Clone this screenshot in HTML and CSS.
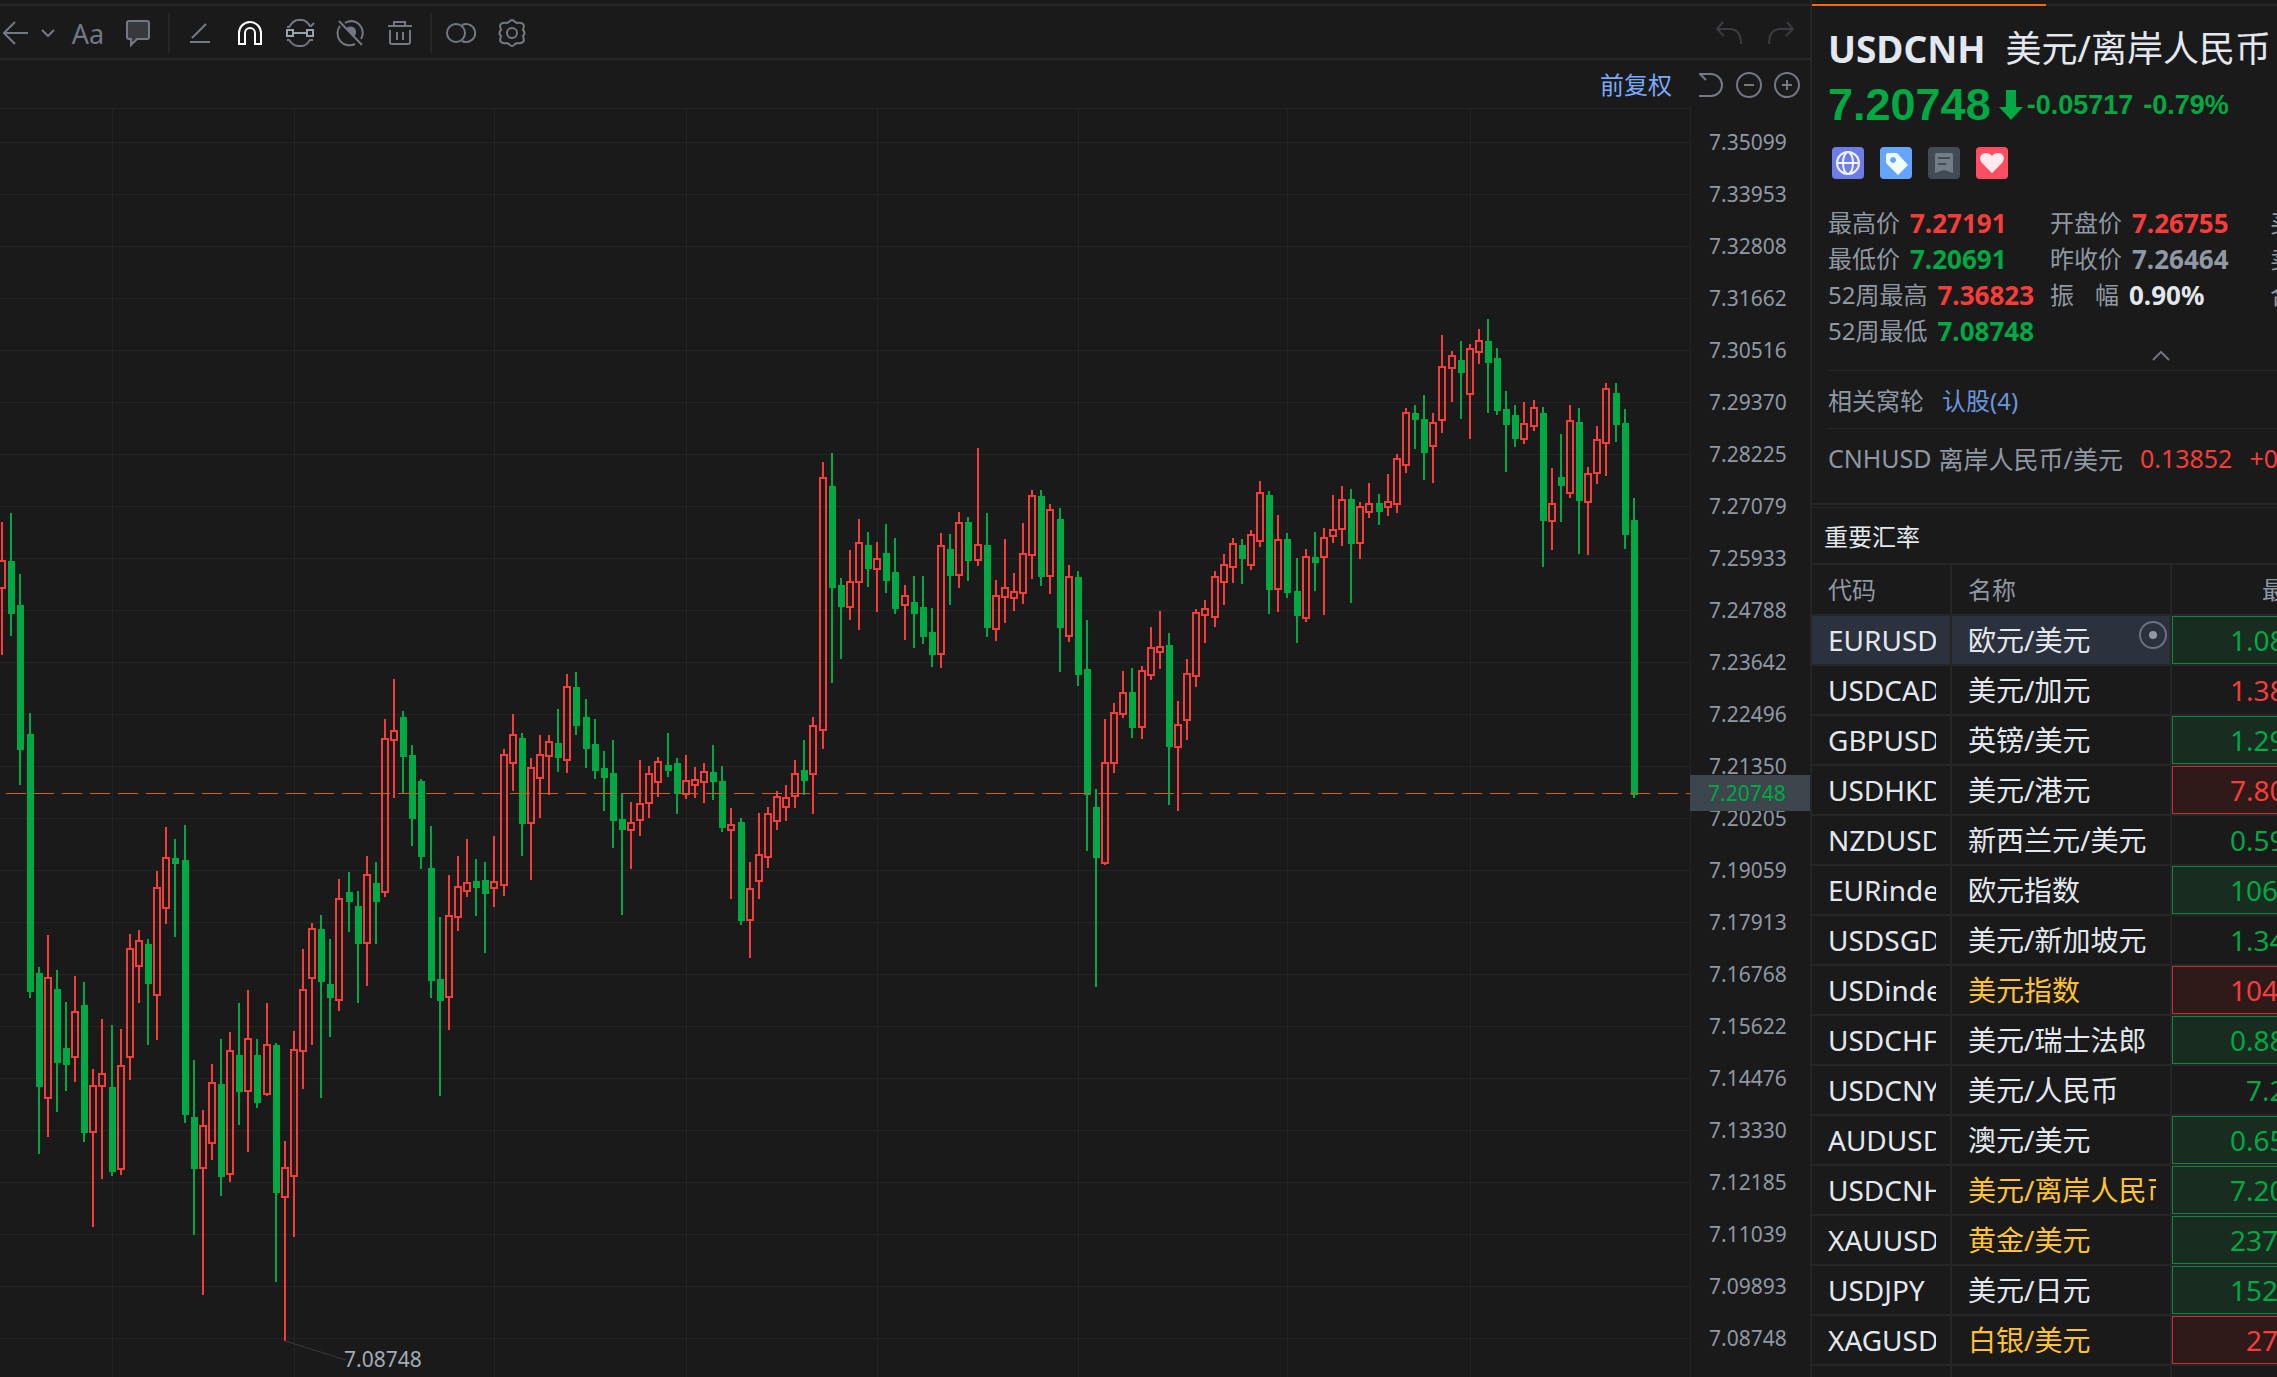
FILE: index.html
```html
<!DOCTYPE html>
<html lang="zh-CN">
<head>
<meta charset="utf-8">
<title>USDCNH 美元/离岸人民币</title>
<link rel="stylesheet" href="styles.css">
</head>
<body>
<main class="chart">
  <header class="toolbar">
    <button class="tool tool-back" aria-label="返回"><svg width="26" height="26" viewBox="0 0 26 26"><path d="M25 13H2M12 2L1 13l11 11"/></svg></button>
    <button class="tool tool-more" aria-label="更多"><svg width="16" height="16" viewBox="0 0 16 16"><path d="M2 5l6 6 6-6"/></svg></button>
    <button class="tool tool-text" aria-label="文字">Aa</button>
    <button class="tool" aria-label="批注"><svg width="28" height="30" viewBox="0 0 28 30"><path class="soft" d="M5 3h18q2 0 2 2v14q0 2-2 2H13l-6 6v-6H5q-2 0-2-2V5q0-2 2-2z"/></svg></button>
    <span class="split"></span>
    <button class="tool" aria-label="画线"><svg width="28" height="28" viewBox="0 0 28 28"><path d="M4 23h20M6 19L20 5"/></svg></button>
    <button class="tool tool-on" aria-label="磁吸"><svg width="28" height="28" viewBox="0 0 28 28"><path d="M3 25V14a11 11 0 0 1 22 0v11h-6V14a5 5 0 0 0-10 0v11z"/></svg></button>
    <button class="tool" aria-label="连续画线"><svg width="30" height="30" viewBox="0 0 30 30"><path d="M2 9h2c3-4 5-7 9-7h4c4 0 6 3 8 6h1l3-3M2 22h2c3 4 5 6 9 6h4c4 0 6-3 8-6h3"/><path class="light" d="M2 12h6v6H2zM22 12h6v6h-6zM8 15h14"/></svg></button>
    <button class="tool" aria-label="隐藏"><svg width="30" height="30" viewBox="0 0 30 30"><path d="M10 5q3-2 7-2a12 12 0 0 1 9 18M20 26A12 12 0 0 1 5 8M4 3l23 24"/><path class="fill" d="M12 11a4 4 0 0 1 7 6z"/></svg></button>
    <button class="tool" aria-label="删除"><svg width="28" height="28" viewBox="0 0 28 28"><path d="M2 7h24M8 7V3h11v4M4 11v12q0 2 2 2h16q2 0 2-2V11M11 13v8M17 13v8"/></svg></button>
    <span class="split"></span>
    <button class="tool" aria-label="叠加"><svg width="34" height="26" viewBox="0 0 34 26"><circle cx="11" cy="13" r="9"/><path d="M17 5a9 9 0 1 1 0 16"/></svg></button>
    <button class="tool" aria-label="设置"><svg width="30" height="30" viewBox="0 0 30 30"><path d="M12 4q3-4 6 0l2 1q6-1 7 3l-1 4q3 3 0 6l1 4q-1 4-7 3l-2 1q-3 4-6 0l-2-1q-6 1-7-3l1-4q-3-3 0-6L3 8q1-4 7-3z"/><circle cx="15" cy="15" r="5"/></svg></button>
    <span class="grow"></span>
    <button class="tool tool-off" aria-label="撤销"><svg width="28" height="28" viewBox="0 0 28 28"><path d="M8 3L2 10l7 7M2 10h14q10 1 10 15"/></svg></button>
    <button class="tool tool-off" aria-label="重做"><svg width="28" height="28" viewBox="0 0 28 28"><path d="M20 3l6 7-7 7M26 10H12Q2 11 2 25"/></svg></button>
  </header>
  <div class="subbar">
    <button class="adjust">前复权</button>
    <button class="zoom" aria-label="重置"><svg width="28" height="28" viewBox="0 0 28 28"><path d="M2 3h12a11 11 0 0 1 0 22H2M3 3l6 6"/></svg></button>
    <button class="zoom" aria-label="缩小"><svg width="28" height="28" viewBox="0 0 28 28"><circle cx="14" cy="14" r="12"/><path d="M9 14h10"/></svg></button>
    <button class="zoom" aria-label="放大"><svg width="28" height="28" viewBox="0 0 28 28"><circle cx="14" cy="14" r="12"/><path d="M9 14h10M14 9v10"/></svg></button>
  </div>
  <div class="board">
    <svg class="plot" id="plot" role="img" aria-label="USDCNH 日K线"></svg>
    <ol class="axis">
      <li>7.35099</li><li>7.33953</li><li>7.32808</li><li>7.31662</li><li>7.30516</li><li>7.29370</li>
      <li>7.28225</li><li>7.27079</li><li>7.25933</li><li>7.24788</li><li>7.23642</li><li>7.22496</li>
      <li>7.21350</li><li>7.20205</li><li>7.19059</li><li>7.17913</li><li>7.16768</li><li>7.15622</li>
      <li>7.14476</li><li>7.13330</li><li>7.12185</li><li>7.11039</li><li>7.09893</li><li>7.08748</li>
    </ol>
    <output class="last">7.20748</output>
  </div>
</main>

<aside class="side">
  <div class="tabline"></div>
  <section class="quote">
    <h1 class="title"><b>USDCNH</b><span>美元/离岸人民币</span></h1>
    <div class="price">
      <strong>7.20748</strong>
      <svg width="24" height="30" viewBox="0 0 24 30"><path d="M7 0h10v17h7L12 30 0 17h7z"/></svg>
      <span>-0.05717</span><span>-0.79%</span>
    </div>
    <div class="badges">
      <button class="badge globe" aria-label="市场"><svg width="32" height="32" viewBox="0 0 32 32"><circle cx="16" cy="16" r="11"/><ellipse cx="16" cy="16" rx="5" ry="11"/><path d="M5 16h22"/></svg></button>
      <button class="badge tag" aria-label="标签"><svg width="32" height="32" viewBox="0 0 32 32"><path fill-rule="evenodd" d="M8 6h9l11 12-10 10L6 16V8q0-2 2-2zM13 10a3 3 0 1 0 .1 0z"/></svg></button>
      <button class="badge note" aria-label="笔记"><svg width="32" height="32" viewBox="0 0 32 32"><path class="page" d="M9 6h14q2 0 2 2v18l-9-3-9 3V8q0-2 2-2z"/><path class="ink" d="M10 11h12M10 17h8"/></svg></button>
      <button class="badge heart" aria-label="自选"><svg width="32" height="32" viewBox="0 0 32 32"><path d="M16 26L6 16C2 11 5 6 10 6q4 0 6 3 2-3 6-3c5 0 8 5 4 10z"/></svg></button>
    </div>
    <dl class="stats">
      <div><dt>最高价</dt><dd class="up">7.27191</dd></div>
      <div><dt>开盘价</dt><dd class="up">7.26755</dd></div>
      <div><dt>买</dt></div>
      <div><dt>最低价</dt><dd class="down">7.20691</dd></div>
      <div><dt>昨收价</dt><dd>7.26464</dd></div>
      <div><dt>卖</dt></div>
      <div><dt>52周最高</dt><dd class="up">7.36823</dd></div>
      <div><dt class="spread"><span>振</span><span>幅</span></dt><dd class="white">0.90%</dd></div>
      <div><dt>合</dt></div>
      <div><dt>52周最低</dt><dd class="down">7.08748</dd></div>
    </dl>
    <button class="fold" aria-label="收起"><svg width="20" height="12" viewBox="0 0 20 12"><path d="M2 11l8-8 8 8"/></svg></button>
    <p class="related"><span>相关窝轮</span><a href="#warrants">认股(4)</a></p>
    <p class="inverse"><span>CNHUSD</span><span>离岸人民币/美元</span><span class="up">0.13852</span><span class="up">+0</span></p>
  </section>

  <section class="rates">
    <h2>重要汇率</h2>
    <table>
      <colgroup><col class="c-code"><col class="c-name"><col></colgroup>
      <thead><tr><th>代码</th><th>名称</th><th class="r-latest">最</th></tr></thead>
      <tbody>
        <tr class="on"><td><span>EURUSD</span></td><td><span>欧元/美元</span><svg class="eye" width="28" height="28" viewBox="0 0 28 28"><circle cx="14" cy="14" r="13"/><circle class="dot" cx="14" cy="14" r="4"/></svg></td><td class="num down box">1.08</td></tr>
        <tr><td><span>USDCAD</span></td><td><span>美元/加元</span></td><td class="num up">1.38</td></tr>
        <tr><td><span>GBPUSD</span></td><td><span>英镑/美元</span></td><td class="num down box">1.29</td></tr>
        <tr><td><span>USDHKD</span></td><td><span>美元/港元</span></td><td class="num up box">7.80</td></tr>
        <tr><td><span>NZDUSD</span></td><td><span>新西兰元/美元</span></td><td class="num down">0.59</td></tr>
        <tr><td><span>EURindex</span></td><td><span>欧元指数</span></td><td class="num down box">106</td></tr>
        <tr><td><span>USDSGD</span></td><td><span>美元/新加坡元</span></td><td class="num down">1.34</td></tr>
        <tr class="fav"><td><span>USDindex</span></td><td><span>美元指数</span></td><td class="num up box">104</td></tr>
        <tr><td><span>USDCHF</span></td><td><span>美元/瑞士法郎</span></td><td class="num down box">0.88</td></tr>
        <tr><td><span>USDCNY</span></td><td><span>美元/人民币</span></td><td class="num down short">7.2</td></tr>
        <tr><td><span>AUDUSD</span></td><td><span>澳元/美元</span></td><td class="num down box">0.65</td></tr>
        <tr class="fav"><td><span>USDCNH</span></td><td><span>美元/离岸人民币</span></td><td class="num down box">7.20</td></tr>
        <tr class="fav"><td><span>XAUUSD</span></td><td><span>黄金/美元</span></td><td class="num down box">237</td></tr>
        <tr><td><span>USDJPY</span></td><td><span>美元/日元</span></td><td class="num down box">152</td></tr>
        <tr class="fav"><td><span>XAGUSD</span></td><td><span>白银/美元</span></td><td class="num up box short">27</td></tr>
        <tr><td></td><td></td><td></td></tr>
      </tbody>
    </table>
  </section>
</aside>
<script src="chart.js"></script>
</body>
</html>
```
FILE: styles.css
```css
* { box-sizing: border-box; }

body {
  margin: 0;
  display: flex;
  height: 100vh;
  overflow: hidden;
  background: #1a1a1a;
  color: #8f98a3;
  font-family: "Noto Sans", "Noto Sans CJK SC", sans-serif;
  font-size: 24px;
}

button {
  border: 0;
  padding: 0;
  background: none;
  color: inherit;
  font: inherit;
}

svg { display: block; }

.up { color: #f63d39; }
.down { color: #00a943; }
.white { color: #e3e8ee; }

/* chart column */
.chart {
  flex: 1;
  min-width: 0;
  display: flex;
  flex-direction: column;
  padding-top: 4px;
}

.toolbar {
  display: flex;
  align-items: center;
  height: 56px;
  padding: 2px 3px 0 0;
  border-top: 2px solid #262626;
  border-bottom: 2px solid #262626;
}

.tool {
  display: flex;
  align-items: center;
  justify-content: center;
  width: 50px;
  height: 40px;
  color: #737884;
}
.tool svg, .zoom svg, .fold svg {
  fill: none;
  stroke: currentColor;
  stroke-width: 2;
}
.tool .soft { fill: #38393d; }
.tool .light { stroke: #98a2ad; }
.tool .fill { fill: currentColor; }
.tool-back { width: 32px; }
.tool-more { width: 31px; }
.tool-text { font-size: 27px; }
.tool-on { color: #fff; }
.tool-off { width: 52px; color: #3b3c3f; }
.split { width: 2px; height: 40px; margin: 0 5px; background: #262626; }
.grow { flex: 1; }

.subbar {
  display: flex;
  align-items: center;
  justify-content: flex-end;
  height: 48px;
  padding: 2px 4px 0 0;
}
.adjust { margin-right: 20px; padding-bottom: 4px; color: #7aa9fb; }
.zoom {
  display: flex;
  justify-content: center;
  width: 38px;
  color: #737884;
}

.board {
  position: relative;
  flex: 1;
  min-height: 0;
  display: flex;
}
.plot { flex: 1; min-width: 0; height: 100%; }
.grid { stroke: #242424; stroke-width: 1; fill: none; }
.grid-v { stroke: #242424; stroke-width: 1; }
.now { stroke: #d4600f; stroke-width: 1; stroke-dasharray: 20 8; }
.fall { fill: #00a943; }
.rise { fill: #f63d39; }
.rise-body { fill: none; stroke: #f63d39; stroke-width: 2; }
.lead { stroke: #3a3a3a; stroke-width: 1; }
.low { fill: #a3acb5; font-size: 21px; }

.axis {
  width: 120px;
  margin: 0;
  padding: 8px 0 0;
  list-style: none;
  border-left: 1px solid #242424;
}
.axis li {
  padding-left: 18px;
  font-size: 21px;
  line-height: 52px;
}
.last {
  position: absolute;
  right: 0;
  top: 667px;
  width: 120px;
  padding-left: 18px;
  background: #3d454d;
  color: #00a943;
  font-size: 21px;
  line-height: 36px;
}

/* quote column */
.side {
  width: 467px;
  overflow: hidden;
  border-left: 2px solid #262626;
  padding-top: 4px;
}
.tabline { height: 2px; background: linear-gradient(#ff6a00, #ff6a00) left / 234px 100% no-repeat #262626; }

.quote { padding: 14px 0 0 16px; white-space: nowrap; }
.title {
  display: flex;
  align-items: center;
  gap: 20px;
  height: 58px;
  margin: 0;
  color: #e3e8f0;
  font-size: 36px;
  font-weight: 400;
  line-height: 58px;
}
.title b { font-size: 37px; }
.price {
  display: flex;
  align-items: center;
  height: 54px;
  color: #00a943;
  fill: #00a943;
  font-family: "Liberation Sans", sans-serif;
  font-size: 27px;
  font-weight: 700;
}
.price strong { margin-right: 8px; font-size: 45px; }
.price svg { margin-right: 4px; }
.price span + span { margin-left: 10px; }

.badges { display: flex; gap: 16px; padding: 15px 0 26px 4px; }
.badge { width: 32px; height: 32px; border-radius: 4px; overflow: hidden; }
.globe { background: #6c7de8; fill: none; stroke: #f1f3ff; stroke-width: 2; }
.tag { background: #66a5ff; fill: #effffe; }
.note { background: #434b54; }
.page { fill: #737d87; }
.ink { stroke: #434b54; stroke-width: 2; }
.heart { background: #ff4d62; fill: #ffebee; }

.stats {
  display: grid;
  grid-template-columns: 222px 220px 40px;
  margin: 0;
  line-height: 36px;
}
.stats div { display: flex; gap: 10px; }
.stats dd { margin: 0; font-size: 26px; font-weight: 700; }
.spread { display: flex; gap: 21px; }

.fold {
  display: flex;
  align-items: flex-start;
  width: 100%;
  height: 22px;
  padding-left: 323px;
  border-bottom: 1px solid #262626;
  color: #6f747c;
}
.related {
  display: flex;
  align-items: center;
  gap: 18px;
  height: 58px;
  margin: 0;
  border-bottom: 1px solid #262626;
}
.related a { color: #6a96dc; text-decoration: none; }
.inverse {
  display: flex;
  align-items: center;
  gap: 7px;
  height: 58px;
  margin: 0 0 16px;
  font-size: 25px;
}
.inverse .up { margin-left: 10px; }

.rates { border-top: 2px solid #262626; }
.rates h2 {
  height: 58px;
  margin: 2px 0 0;
  padding-left: 12px;
  border-top: 1px solid #262626;
  border-bottom: 2px solid #262626;
  color: #e3e8ee;
  font-size: 24px;
  font-weight: 400;
  line-height: 58px;
}
.rates table {
  width: 100%;
  table-layout: fixed;
  border-spacing: 0;
  font-size: 28px;
  line-height: 48px;
  color: #e3e8ee;
}
.c-code { width: 140px; }
.c-name { width: 220px; }
.rates th {
  height: 51px;
  padding: 0 0 0 16px;
  color: #8f98a3;
  font-size: 24px;
  font-weight: 400;
  text-align: left;
}
.rates th, .rates td {
  border-bottom: 2px solid #262626;
  border-right: 2px solid #262626;
  white-space: nowrap;
}
.rates td { position: relative; height: 50px; padding: 0 14px 0 16px; }
.rates td span { display: block; height: 48px; overflow: hidden; }
.rates th.r-latest { padding-left: 90px; border-right: 0; overflow: hidden; }
.rates td:last-child { border-right: 0; }
.on td:not(.num) { background: #2b323d; }
.fav td:nth-child(2) { color: #ffc233; }
.rates td.num { padding: 0 0 0 58px; overflow: hidden; }
.rates td.short { padding-left: 74px; }
.rates .up { color: #f63d39; }
.rates .down { color: #00a943; }
.box.down { background: #182c20; box-shadow: inset 1px 1px #10833c, inset 0 -1px #10833c; }
.box.up { background: #2f1a19; box-shadow: inset 1px 1px #b83633, inset 0 -1px #b83633; }
.eye {
  position: absolute;
  right: 3px;
  top: 5px;
  fill: none;
  stroke: #69727f;
  stroke-width: 2;
}
.eye .dot { fill: #8f98a3; stroke: none; }
```
FILE: chart.js
```js
// Each row: direction (1 = rise, 0 = fall), high, body top, body bottom, low.
const bars = [
  [1,522,560,589,655],[0,513,561,614,636],[0,574,605,750,785],[0,713,734,992,998],[0,967,973,1087,1154],
  [1,935,977,1099,1137],[0,970,989,1063,1112],[0,1002,1048,1065,1091],[1,976,1011,1058,1082],[0,982,1005,1133,1142],
  [1,1069,1085,1133,1227],[1,1019,1073,1087,1179],[0,1025,1087,1172,1176],[1,1029,1065,1170,1175],[1,934,948,1058,1080],
  [1,930,940,967,1003],[0,939,944,984,1045],[1,871,887,996,1040],[1,827,857,909,924],[0,839,858,864,937],
  [0,825,860,1115,1123],[0,1060,1117,1169,1235],[1,1110,1125,1169,1295],[1,1064,1082,1144,1160],[0,1039,1084,1177,1196],
  [1,1032,1050,1175,1182],[0,1003,1055,1092,1125],[1,990,1038,1092,1152],[0,1039,1055,1103,1108],[1,1003,1044,1095,1096],
  [0,1043,1045,1193,1282],[1,1141,1167,1198,1341],[1,1031,1049,1177,1237],[1,949,989,1052,1089],[1,923,928,979,1045],
  [0,915,929,982,1098],[0,939,984,998,1037],[1,879,898,1001,1011],[0,872,892,902,932],[0,891,906,944,1003],
  [1,856,874,944,986],[0,862,883,902,944],[1,719,738,893,897],[1,679,730,741,798],[0,711,717,757,794],
  [0,745,755,819,846],[0,779,781,857,869],[0,826,868,981,998],[0,917,979,1001,1096],[1,875,915,998,1030],
  [1,856,886,918,931],[1,839,882,892,897],[0,859,881,888,916],[0,862,880,894,953],[1,836,881,889,907],
  [1,749,754,886,896],[1,714,734,764,791],[0,733,738,824,856],[1,758,767,824,880],[1,735,754,779,818],
  [1,735,741,757,795],[0,709,743,758,772],[1,674,686,761,773],[0,672,687,726,735],[0,699,717,749,768],
  [0,719,744,771,779],[0,751,768,778,811],[0,740,773,821,848],[0,793,819,830,915],[1,802,822,831,869],
  [1,760,803,821,836],[1,766,773,804,818],[1,757,761,783,797],[0,733,765,771,777],[0,758,763,794,814],
  [1,755,780,795,799],[1,767,779,786,798],[1,763,771,783,803],[0,745,772,782,800],[0,766,781,828,832],
  [1,808,824,831,899],[0,818,822,921,925],[1,862,888,921,958],[1,813,854,882,899],[1,807,813,858,868],
  [1,791,796,822,830],[1,785,797,808,821],[1,760,773,797,808],[0,740,770,781,795],[1,717,725,775,814],
  [1,462,477,731,749],[0,453,486,588,683],[0,578,585,607,659],[1,550,581,608,620],[1,519,542,583,630],
  [0,532,545,569,587],[1,542,558,570,612],[0,524,553,581,593],[0,538,572,609,614],[1,585,595,606,640],
  [0,576,602,614,648],[0,576,607,637,644],[0,608,632,655,667],[1,533,545,655,668],[0,534,549,576,605],
  [1,512,522,576,588],[0,517,522,561,581],[1,448,544,561,566],[0,513,545,628,637],[1,580,595,630,641],
  [1,539,587,598,623],[1,573,591,599,611],[1,523,553,594,604],[1,490,495,556,579],[0,490,496,577,586],
  [1,504,509,577,594],[0,508,519,628,672],[1,565,576,637,642],[0,571,577,675,686],[0,620,669,795,851],
  [0,789,807,858,987],[1,719,762,864,865],[1,703,712,764,773],[1,671,692,715,718],[0,668,692,728,738],
  [1,666,670,728,739],[1,627,647,676,680],[1,611,646,653,669],[0,633,645,747,805],[1,701,724,748,811],
  [1,659,673,721,740],[1,609,612,677,687],[1,600,608,616,643],[1,571,576,618,627],[1,554,564,583,605],
  [1,538,543,568,583],[0,539,545,559,584],[1,530,534,566,570],[1,481,492,542,547],[0,491,495,590,614],
  [1,515,539,590,612],[0,533,539,593,598],[0,558,591,616,643],[1,549,556,619,622],[0,532,557,563,591],
  [1,528,537,558,615],[1,495,529,537,543],[1,486,499,530,546],[0,489,499,544,603],[1,502,506,544,559],
  [1,483,503,513,518],[0,494,503,512,525],[1,474,501,508,516],[1,454,458,505,513],[1,408,412,466,473],
  [0,405,413,420,449],[0,395,419,453,480],[1,413,422,447,483],[1,335,366,421,433],[1,351,355,369,402],
  [0,341,360,373,419],[1,344,348,395,439],[1,329,340,353,364],[0,319,341,363,413],[0,348,358,411,415],
  [0,391,409,425,472],[0,405,415,439,447],[1,402,423,440,444],[1,400,407,427,431],[0,407,413,521,567],
  [1,468,503,522,550],[0,434,477,486,522],[1,405,420,494,498],[0,408,422,501,554],[1,467,473,503,555],
  [1,426,439,474,484],[1,383,388,444,476],[0,383,393,425,442],[0,409,423,535,549],[0,498,520,795,798]
];

const TOP = 108;        // chart units above the plot's upper edge
const LAST_Y = 793;     // level of the last price
const plot = document.getElementById('plot');

function add(name, attrs) {
  const el = document.createElementNS('http://www.w3.org/2000/svg', name);
  for (const key in attrs) el.setAttribute(key, attrs[key]);
  plot.appendChild(el);
  return el;
}

const line = (cls, x1, y1, x2, y2) => add('line', { class: cls, x1, y1, x2, y2 });

// Bars are spaced so that every eighth or ninth gap is one pixel wider.
const barX = i => 2 + 9 * i + Math.floor((i + 6.078) / 8.688);

line('grid', 0, 0.5, '100%', 0.5);
for (let k = 0; k < 24; k++) {
  const y = 142 - TOP + 52 * k + 0.5;
  line('grid', 0, y, '100%', y);
}
[112, 294, 494, 686, 877, 1078, 1287, 1470].forEach(x => line('grid-v', x + 0.5, 0, x + 0.5, '100%'));

bars.forEach(([rise, high, top, bottom, low], i) => {
  const x = barX(i);
  const t = top - TOP, b = bottom - TOP, h = high - TOP, l = low - TOP;
  if (rise) {
    add('rect', { class: 'rise', x: x - 1, y: h, width: 2, height: t - h });
    add('rect', { class: 'rise', x: x - 1, y: b, width: 2, height: l - b });
    add('rect', { class: 'rise-body', x: x - 3, y: t + 1, width: 6, height: b - t - 2 });
  } else {
    add('rect', { class: 'fall', x: x - 1, y: h, width: 2, height: l - h });
    add('rect', { class: 'fall', x: x - 3, y: t, width: 7, height: b - t });
  }
});

line('now', 6, LAST_Y - TOP + 0.5, '100%', LAST_Y - TOP + 0.5);
line('lead', 285, 1341 - TOP, 346, 1360 - TOP);
add('text', { class: 'low', x: 344, y: 1367 - TOP }).textContent = '7.08748';
```
